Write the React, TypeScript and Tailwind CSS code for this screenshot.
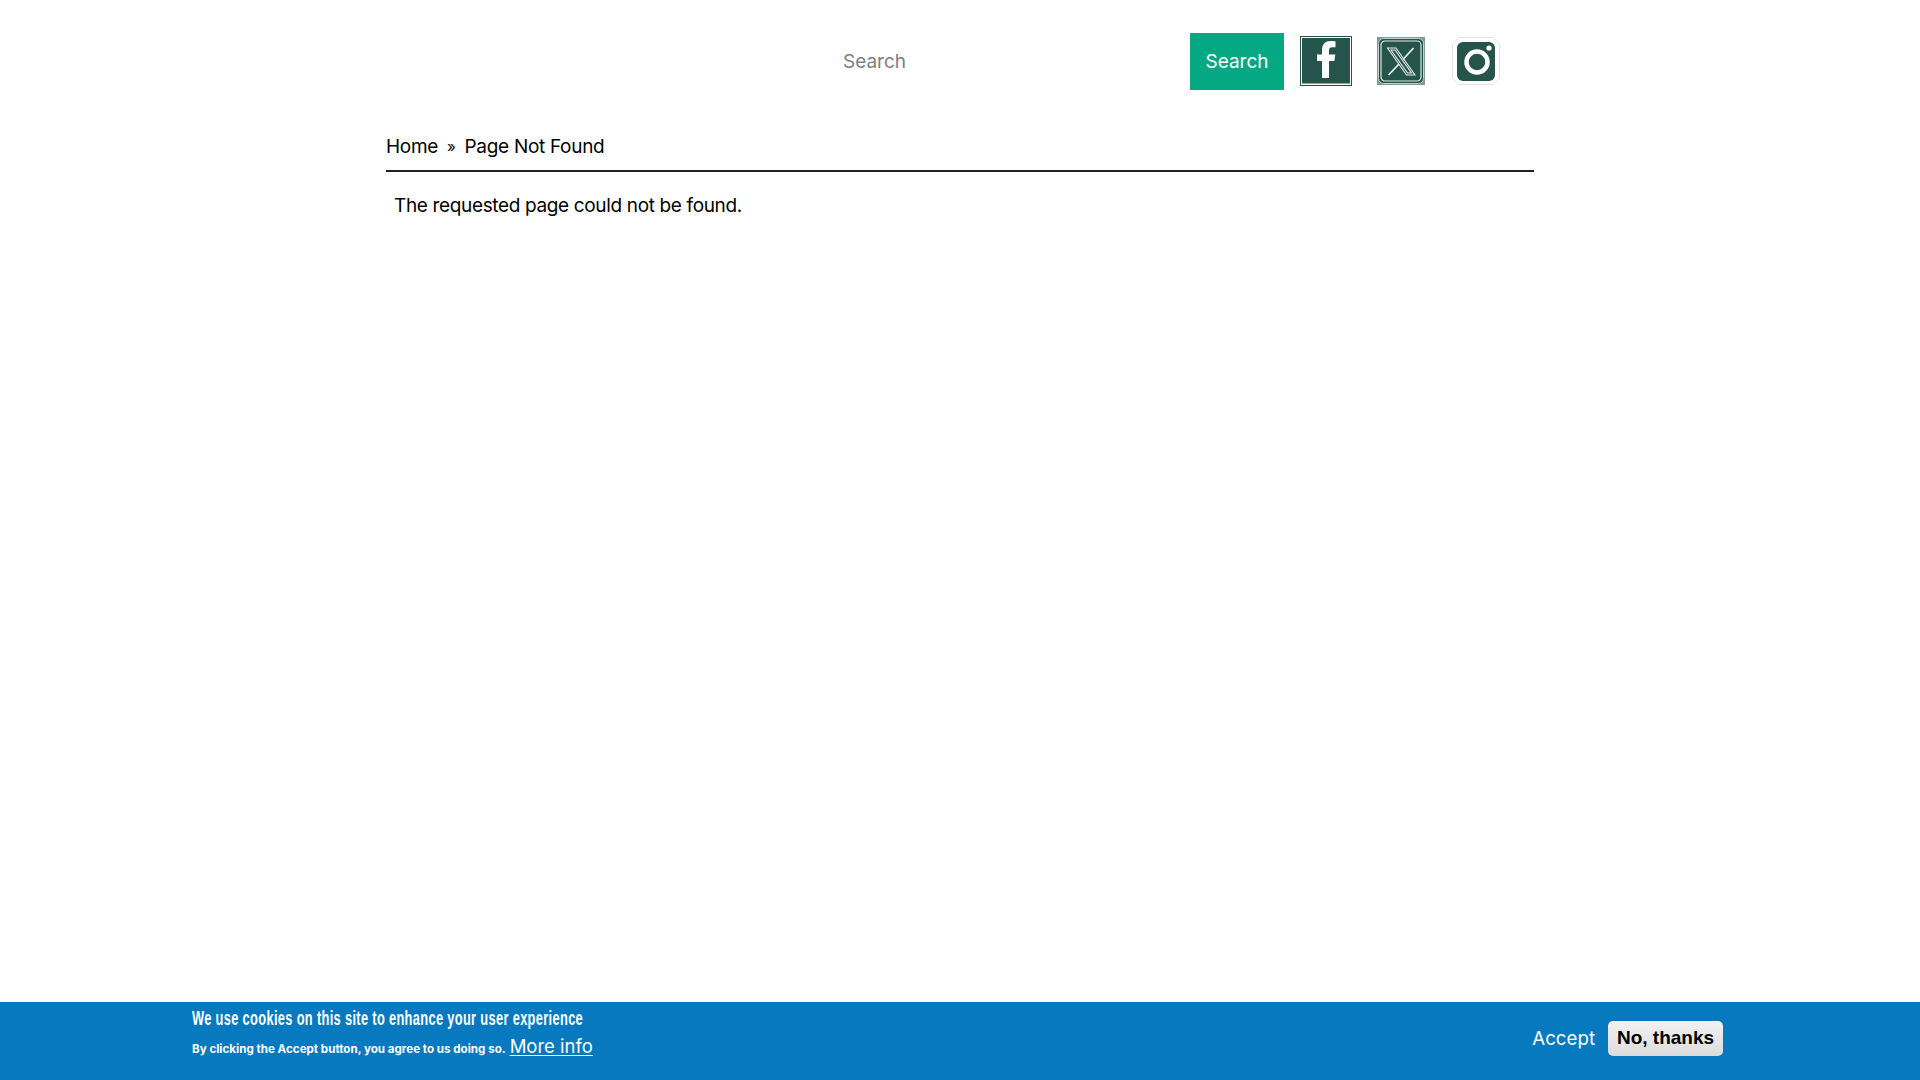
import { useState } from 'react'

const sans = { fontFamily: '"Inter", "Open Sans", sans-serif' }

function FacebookIcon() {
  return (
    <svg viewBox="0 0 52 50" className="w-[52px] h-[50px] block">
      <rect x="0.5" y="0.5" width="51" height="49" fill="#fff" stroke="#24544a" />
      <rect x="2" y="2" width="48" height="45.500" fill="#24544a" />
      <path
        d="M22 42V25h-5v-6.500h5V14c0-6 3.500-9 8.500-9 2.200 0 4 .2 5 .3v6h-3.300c-2.700 0-3.200 1.300-3.200 3.200v4h6.300l-.9 6.500H29v17z"
        fill="#fff"
      />
    </svg>
  )
}

function XIcon() {
  return (
    <svg viewBox="0 0 48 48" className="w-[48px] h-[48px] block">
      <rect width="48" height="48" fill="#7f9a93" />
      <rect x="1.500" y="1.500" width="45" height="45" rx="5" fill="#24544a" stroke="#c7d2cf" />
      <rect x="4" y="4" width="40" height="40" rx="4" fill="#24544a" stroke="#e3e9e7" strokeWidth="1.200" />
      <path
        d="M10.500 11h8.500L38 38h-8.500zM14 13l16.500 23h4L18 13z"
        fill="none"
        stroke="#e6ecea"
        strokeWidth="1.100"
      />
      <path d="M36.500 11 26 22.500M22 27 11.500 38" stroke="#e6ecea" strokeWidth="1.800" fill="none" />
    </svg>
  )
}

function InstagramIcon() {
  return (
    <svg viewBox="0 0 48 48" className="w-[48px] h-[48px] block">
      <path d="M7 .5h34L47.500 7v34L41 47.500H7L.5 41V7z" fill="#fff" stroke="#e2e6e5" />
      <rect x="5" y="5" width="38" height="39" rx="6" fill="#24544a" />
      <circle cx="25" cy="25" r="10.500" fill="none" stroke="#fff" strokeWidth="4.500" />
      <circle cx="37" cy="11" r="2.600" fill="#fff" />
    </svg>
  )
}

export default function App() {
  const [query, setQuery] = useState('')

  return (
    <div className="relative w-full h-[1080px] bg-white text-black overflow-hidden" style={sans}>
      <div className="w-[1148px] ml-[386px]">
        <div className="flex items-center h-[57px] mt-[33px]">
          <input
            value={query}
            onChange={(e) => setQuery(e.target.value)}
            placeholder="Search"
            className="ml-[457px] w-[347px] h-[57px] text-[19px] outline-none placeholder:text-[#808080]"
          />
          <button className="w-[94px] h-[57px] pt-px bg-[#04a882] text-white text-[19px]">Search</button>
          <a href="#" className="ml-[16px] -mt-[2px]"><FacebookIcon /></a>
          <a href="#" className="ml-[25px] -mt-[2px]"><XIcon /></a>
          <a href="#" className="ml-[27px] -mt-[2px]"><InstagramIcon /></a>
        </div>

        <div className="mt-[32px] h-[50px] pt-[3px] flex items-center text-[19px] tracking-[-0.3px] border-b-2 border-[#222]">
          <a href="#">Home</a>
          <span className="mx-[9px] text-[15px]">»</span>
          <span>Page Not Found</span>
        </div>

        <p className="mt-[20px] pl-[8px] text-[19px] tracking-[-0.35px] leading-[28px]">The requested page could not be found.</p>
      </div>

      <div className="absolute left-0 right-0 bottom-0 h-[78px] bg-[#0779bf] text-white">
        <div className="flex w-[1536px] mx-auto justify-between">
          <div>
            <h2
              className="mt-[4px] text-[20px] leading-[24px] font-bold tracking-[0.5px] whitespace-nowrap origin-left scale-x-[0.643]"
              style={{ fontFamily: '"Liberation Sans", sans-serif' }}
            >
              We use cookies on this site to enhance your user experience
            </h2>
            <p className="mt-[3px] flex items-baseline text-[11.600px] font-bold">
              By clicking the Accept button, you agree to us doing so.
              <a href="#" className="ml-[4px] text-[18.500px] font-normal underline underline-offset-2">More info</a>
            </p>
          </div>
          <div className="flex items-start pt-[19px] pr-[5px]">
            <button className="text-[18.700px] h-[35px] pt-px">Accept</button>
            <button
              className="ml-[13px] w-[115px] h-[35px] rounded-[5px] bg-gradient-to-b from-[#f2f2f2] to-[#dcdcdc] text-black text-[19px] font-bold"
              style={{ fontFamily: '"Liberation Sans", sans-serif' }}
            >
              No, thanks
            </button>
          </div>
        </div>
      </div>
    </div>
  )
}
